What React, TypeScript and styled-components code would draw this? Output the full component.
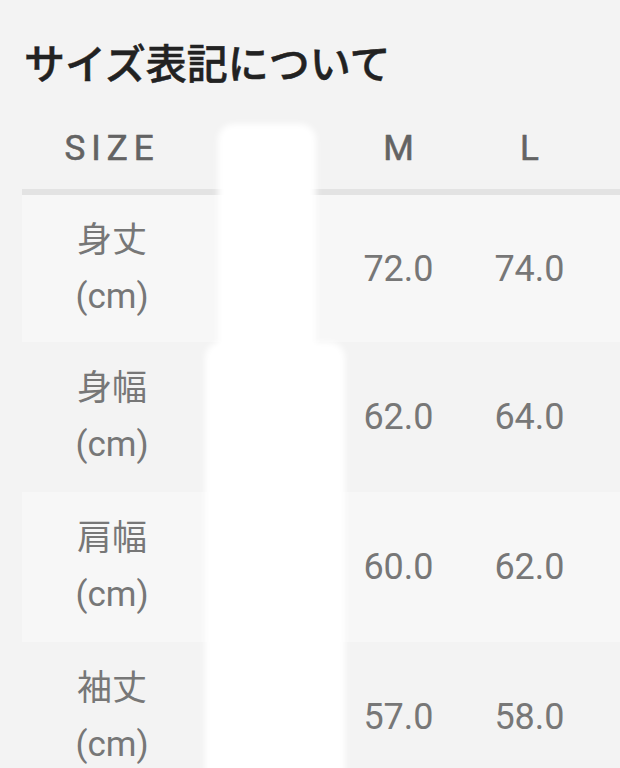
import styled, { createGlobalStyle } from 'styled-components';

const GlobalStyle = createGlobalStyle`
  html, body {
    margin: 0;
    padding: 0;
    background: #f3f3f3;
  }
  body {
    font-family: Roboto, 'Noto Sans CJK JP', sans-serif;
  }
`;

const Page = styled.div`
  position: relative;
  height: 768px;
  overflow: hidden;
  padding: 42px 0 0 22px;
  box-sizing: border-box;
`;

const Title = styled.h2`
  margin: 0 0 21px 2px;
  font-size: 41px;
  line-height: 47px;
  font-weight: 500;
  color: #222;
  -webkit-text-stroke: 0.5px #222;
`;

const TableScroll = styled.div`
  overflow: hidden;
`;

const Table = styled.table`
  border-collapse: collapse;
  table-layout: fixed;
  width: 704px;
`;

const HeadCell = styled.th<{ $first?: boolean }>`
  height: 77px;
  padding: 0 0 2px;
  text-align: center;
  font-size: 35px;
  font-weight: 400;
  color: #636363;
  -webkit-text-stroke: 0.6px #636363;
  letter-spacing: ${(p) => (p.$first ? '6px' : '0')};
  border-bottom: 6px solid #e3e3e3;
`;

const Row = styled.tr<{ $odd: boolean }>`
  height: 150px;
  background: ${(p) => (p.$odd ? '#f7f7f7' : '#f3f3f3')};
`;

const LabelCell = styled.td`
  padding: 0;
  text-align: center;
  font-size: 35px;
  line-height: 56px;
  color: #777;
`;

const ValueCell = styled.td`
  padding: 0;
  text-align: center;
  font-size: 36px;
  color: #777;
`;

// redacted column in the capture
const Mask = styled.div<{ $top: number; $left: number; $w: number; $h: number }>`
  position: absolute;
  top: ${(p) => p.$top}px;
  left: ${(p) => p.$left}px;
  width: ${(p) => p.$w}px;
  height: ${(p) => p.$h}px;
  background: #fff;
  border-radius: 16px 16px 0 0;
  filter: blur(3px);
`;

// S is hidden in the capture, the last column is off screen
const sizes = ['', 'M', 'L', ''];

const rows = [
  { name: '身丈', values: ['', '72.0', '74.0', ''] },
  { name: '身幅', values: ['', '62.0', '64.0', ''] },
  { name: '肩幅', values: ['', '60.0', '62.0', ''] },
  { name: '袖丈', values: ['', '57.0', '58.0', ''] },
];

export default function App() {
  return (
    <>
      <GlobalStyle />
      <Page>
        <Title>サイズ表記について</Title>
        <TableScroll>
          <Table>
            <colgroup>
              <col style={{ width: 180 }} />
              {sizes.map((s, i) => (
                <col key={i} style={{ width: 131 }} />
              ))}
            </colgroup>
            <thead>
              <tr>
                <HeadCell $first>SIZE</HeadCell>
                {sizes.map((s, i) => (
                  <HeadCell key={i}>{s}</HeadCell>
                ))}
              </tr>
            </thead>
            <tbody>
              {rows.map((r, i) => (
                <Row key={r.name} $odd={i % 2 === 0}>
                  <LabelCell>
                    {r.name}
                    <br />
                    (cm)
                  </LabelCell>
                  {r.values.map((v, j) => (
                    <ValueCell key={j}>{v}</ValueCell>
                  ))}
                </Row>
              ))}
            </tbody>
          </Table>
        </TableScroll>
        <Mask $top={124} $left={218} $w={98} $h={260} />
        <Mask $top={342} $left={205} $w={140} $h={440} />
      </Page>
    </>
  );
}
